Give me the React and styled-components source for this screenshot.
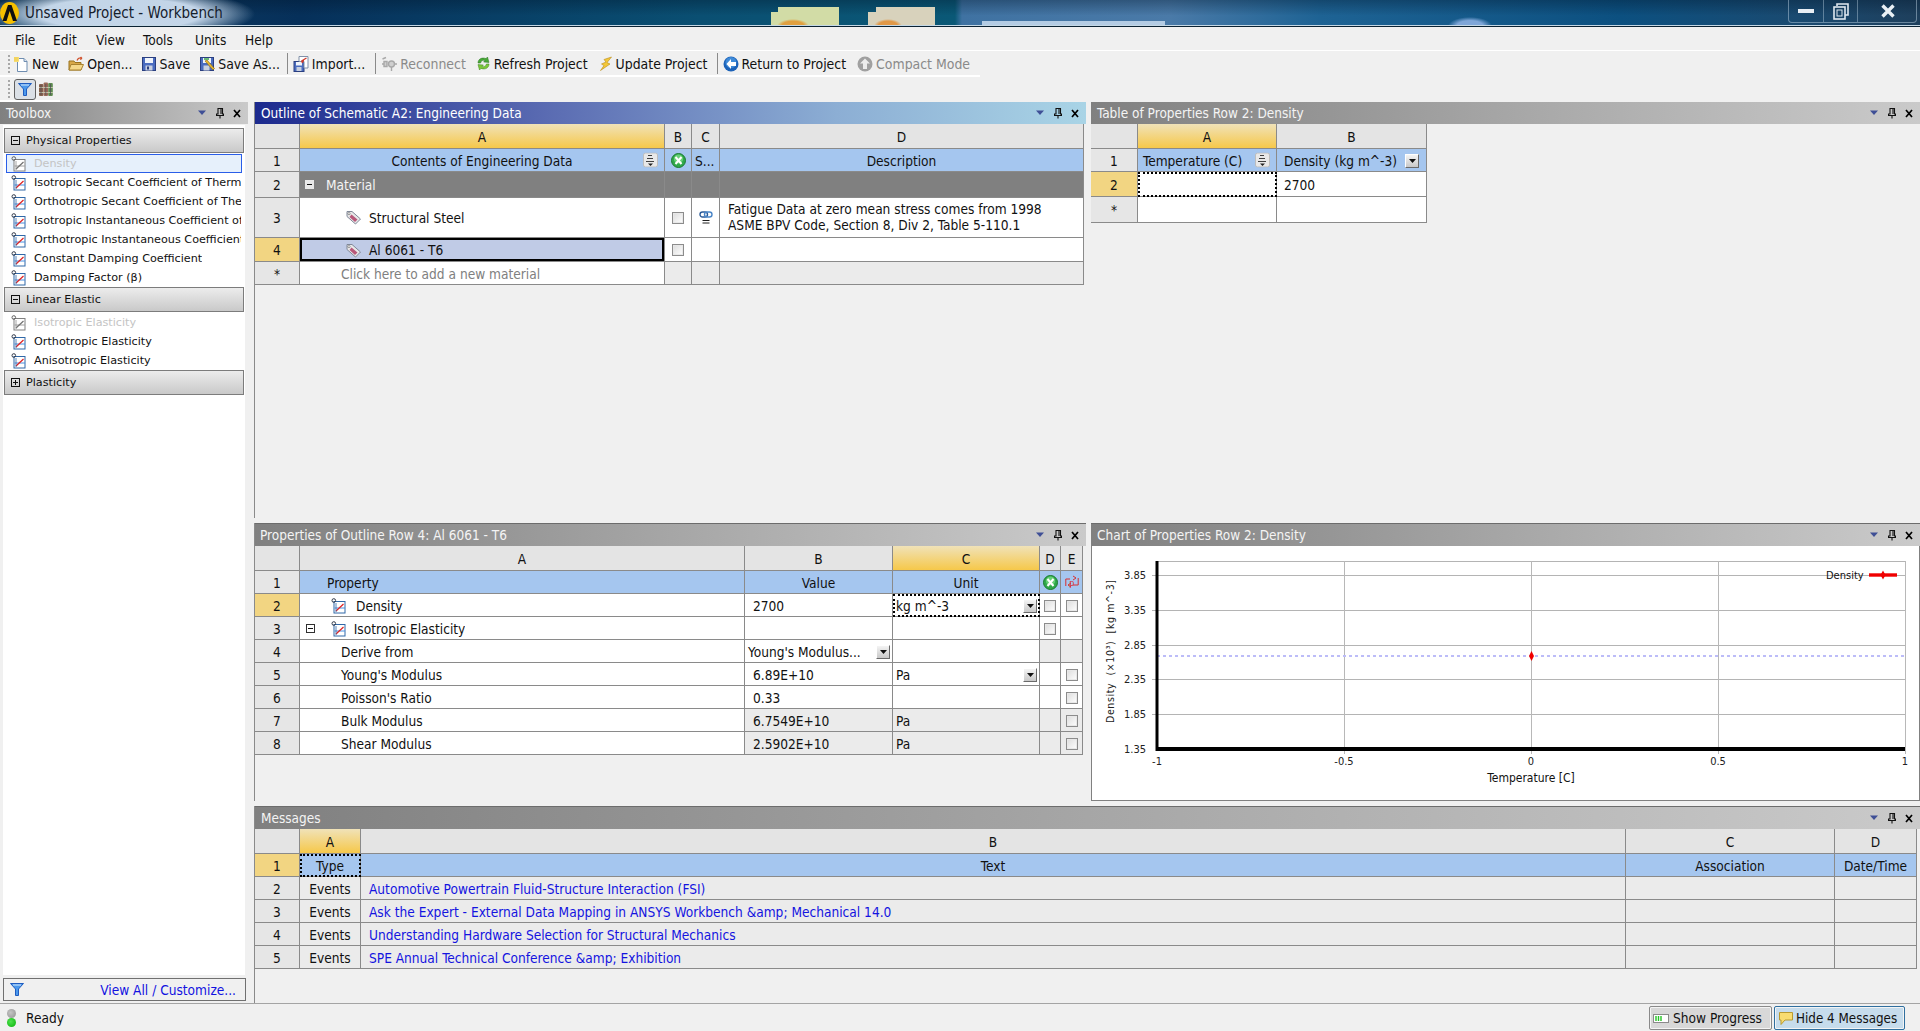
import React from 'react';
import styled, { createGlobalStyle } from 'styled-components';

const GlobalStyle = createGlobalStyle`
	html, body {
		margin: 0;
		padding: 0;
		background: #f0f0f0;
	}
	* {
		box-sizing: border-box;
	}
`;

const UI_FONT = `"DejaVu Sans Condensed", "DejaVu Sans", sans-serif`;
const LINE = '#8a8a8a';

const Window = styled.div`
	width: 1920px;
	height: 1031px;
	display: flex;
	flex-direction: column;
	overflow: hidden;
	background: #f0f0f0;
	font-family: ${UI_FONT};
	font-stretch: condensed;
	font-size: 13.6px;
	color: #111;
`;

/* title bar */
const TitleBar = styled.div`
	height: 27px;
	flex: none;
	display: flex;
	align-items: flex-start;
	justify-content: space-between;
	border-bottom: 1px solid #0b2233;
	box-shadow: inset 0 -1px 0 #c4d8e6;
	background:
		radial-gradient(ellipse 135px 26px at 120px 14px, rgba(205, 222, 240, 0.95) 60%, rgba(205, 222, 240, 0) 100%),
		radial-gradient(ellipse 16px 7px at 793px 26px, #e0a040 70%, rgba(224, 160, 64, 0) 100%),
		radial-gradient(ellipse 14px 7px at 888px 26px, #e09848 70%, rgba(224, 152, 72, 0) 100%),
		linear-gradient(#d2dca6, #d2dca6) 778px 7px / 61px 19px no-repeat,
		linear-gradient(#d2dca6, #d2dca6) 771px 12px / 20px 14px no-repeat,
		linear-gradient(#d8d2bc, #d8d2bc) 876px 7px / 59px 19px no-repeat,
		linear-gradient(#d8d2bc, #d8d2bc) 868px 12px / 20px 14px no-repeat,
		linear-gradient(#b4cce4, #b4cce4) 982px 21px / 183px 5px no-repeat,
		radial-gradient(ellipse 22px 9px at 1470px 26px, #7fa6d8 60%, rgba(127, 166, 216, 0) 100%),
		linear-gradient(rgba(0, 20, 40, 0.35), rgba(0, 20, 40, 0) 60%),
		linear-gradient(90deg, #123f63 0, #06305a 300px, #0a4f72 700px, #0a5876 955px, #3f72a2 962px, #4a7aa8 1170px, #1e6394 1320px, #0c5080 1620px, #1a4a70 1800px, #1e3f5c 1920px);
`;

const TitleLeft = styled.div`
	display: flex;
	align-items: center;
	gap: 5px;
	height: 25px;
	font-size: 15px;
	color: #15202c;
`;

const WindowButtons = styled.div`
	width: 129px;
	height: 23px;
	margin-right: 3px;
	display: grid;
	grid-template-columns: 35px 34px 60px;
	border: 1px solid rgba(200, 220, 235, 0.45);
	border-top: none;
	border-radius: 0 0 4px 4px;
`;

const WindowButton = styled.div`
	display: flex;
	align-items: center;
	justify-content: center;
	border-right: ${p => (p.$last ? 'none' : '1px solid rgba(200, 220, 235, 0.4)')};
`;

/* menu + toolbars */
const MenuBar = styled.div`
	height: 24px;
	flex: none;
	display: flex;
	align-items: center;
	border-bottom: 1px solid #fff;
	padding-top: 2px;
`;

const MenuItem = styled.div`
	width: ${p => p.$w}px;
	padding-left: ${p => p.$pad || 0}px;
`;

const ToolRow = styled.div`
	height: 26px;
	flex: none;
	width: 980px;
	display: flex;
	align-items: center;
	padding: 1px 0 0 8px;
	font-size: 13.9px;
	border-bottom: 2px solid #fff;
`;

const SubToolRow = styled.div`
	height: 25px;
	flex: none;
	width: 60px;
	display: flex;
	align-items: center;
	padding: 1px 0 0 8px;
	gap: 2px;
	border-bottom: 2px solid #fff;
`;

const Grip = styled.div`
	width: 3px;
	height: 18px;
	margin-right: ${p => p.$gap}px;
	background: radial-gradient(circle at 1px 1px, #a8a8a8 1px, transparent 1.2px) 0 0 / 3px 4px;
`;

const ToolButton = styled.div`
	display: flex;
	align-items: center;
	gap: 3px;
	margin-right: ${p => p.$gap}px;
	white-space: nowrap;
	color: ${p => (p.$off ? '#8a8a8a' : '#111')};
`;

const ToolSep = styled.div`
	width: 1px;
	height: 21px;
	background: #8a8a8a;
	margin: 0 5px 0 ${p => p.$left || 4}px;
`;

const FilterToggle = styled.div`
	width: 22px;
	height: 21px;
	display: flex;
	align-items: center;
	justify-content: center;
	border: 1px solid #606060;
	border-radius: 3px;
	background: #dbe0e6;
`;

/* main layout */
const Main = styled.div`
	flex: 1;
	min-height: 0;
	display: grid;
	grid-template-columns: 248px 1fr;
	column-gap: 6px;
`;

const Toolbox = styled.div`
	display: flex;
	flex-direction: column;
	min-height: 0;
`;

const PaneHeader = styled.div`
	height: ${p => (p.$ruled ? 23 : 22)}px;
	flex: none;
	display: flex;
	align-items: center;
	justify-content: space-between;
	padding: 0 7px 0 ${p => (p.$tight ? 5 : 6)}px;
	border-top: ${p => (p.$ruled ? '1px solid #6c6c6c' : 'none')};
	color: ${p => (p.$active ? '#fff' : '#f4f4f4')};
	font-size: 13.5px;
	background: ${p =>
		p.$active
			? 'linear-gradient(90deg, #1c2a8e 0, #5a6bb2 35%, #8caed4 70%, #a9d4e6 100%)'
			: 'linear-gradient(90deg, #808080 0, #a6a6a6 50%, #cacaca 100%)'};
`;

const PaneControls = styled.div`
	display: flex;
	align-items: center;
	gap: 9px;
`;

const ToolList = styled.div`
	flex: 1;
	margin: 1px 3px 3px 3px;
	padding: 3px 1px 0;
	background: #fff;
	display: flex;
	flex-direction: column;
`;

const GroupHead = styled.div`
	height: 25px;
	flex: none;
	display: flex;
	align-items: center;
	gap: 6px;
	padding-left: 6px;
	border: 1px solid #7c7c7c;
	background: linear-gradient(#ececec, #c9c9c9);
	font-family: "DejaVu Sans", sans-serif;
	font-stretch: normal;
	font-size: 11.2px;
`;

const ToolItem = styled.div`
	height: 19px;
	flex: none;
	margin: 0 2px;
	display: flex;
	align-items: center;
	gap: 8px;
	padding-left: 4px;
	white-space: nowrap;
	font-family: "DejaVu Sans", sans-serif;
	font-stretch: normal;
	font-size: 11.2px;
	color: ${p => (p.$off ? '#c4c4c4' : '#111')};
	border: ${p => (p.$sel ? '1px solid #2a5ee8' : '1px solid transparent')};
	background: ${p => (p.$sel ? '#e6f0fb' : 'transparent')};
`;

const ItemLabel = styled.span`
	min-width: 0;
	overflow: hidden;
`;

const ListGap = styled.div`
	height: 1px;
	flex: none;
`;

const ViewAll = styled.div`
	height: 23px;
	flex: none;
	margin: 0 2px 2px 3px;
	display: flex;
	align-items: center;
	justify-content: space-between;
	padding: 0 9px 0 6px;
	border: 1px solid #707070;
	color: #1212e0;
`;

const Workspace = styled.div`
	display: grid;
	grid-template-columns: 832px 829px;
	grid-template-rows: 416px 278px 1fr;
	column-gap: 5px;
	row-gap: 5px;
	min-height: 0;
`;

const Pane = styled.div`
	grid-column: ${p => p.$span || 'auto'};
	display: flex;
	flex-direction: column;
	min-height: 0;
	border-left: ${p => (p.$flat ? 'none' : `1px solid ${LINE}`)};
`;

/* tables */
const Sheet = styled.div`
	display: flex;
	flex-direction: column;
`;

const Row = styled.div`
	display: grid;
	grid-template-columns: ${p => p.$cols};
	height: ${p => p.$h}px;
	flex: none;
`;

const toneColors = {
	plain: '#fff',
	head: '#e4e4e4',
	num: '#e6e6e6',
	numHot: '#f2d582',
	blue: '#a5c6ef',
	dark: '#808080',
	selected: '#c0cbe6',
	ro: '#ebebeb'
};

const Cell = styled.div`
	display: flex;
	align-items: center;
	justify-content: ${p => (p.$center ? 'center' : 'flex-start')};
	gap: ${p => p.$gap || 0}px;
	padding-top: ${p => (p.$lift ? 0 : 1)}px;
	padding-left: ${p => p.$indent || 0}px;
	border-right: 1px solid ${LINE};
	border-bottom: 1px solid ${LINE};
	white-space: nowrap;
	overflow: hidden;
	line-height: 16px;
	position: relative;
	color: ${p => p.$color || '#111'};
	background: ${p => (p.$hot ? 'linear-gradient(#f0e2b8, #f6c84a)' : toneColors[p.$tone || 'plain'])};
	outline: ${p => (p.$focus ? '2px dotted #000' : 'none')};
	outline-offset: -2px;
	box-shadow: ${p => (p.$sel ? 'inset 0 0 0 2px #000' : 'none')};
`;

const CellPush = styled.div`
	margin-left: auto;
	display: flex;
`;

const TreeSlot = styled.div`
	width: 25px;
	flex: none;
	display: flex;
`;

const WrapText = styled.div`
	white-space: normal;
	line-height: 16px;
	margin-top: -3px;
`;

const DropButton = styled.div`
	width: 14px;
	height: 14px;
	margin: 0 ${p => p.$right || 2}px 0 auto;
	flex: none;
	display: flex;
	align-items: center;
	justify-content: center;
	background: linear-gradient(#f4f4f4, #c8c8c8);
	border: 1px solid #fff;
	border-right-color: #6a6a6a;
	border-bottom-color: #6a6a6a;
`;

const Corner = styled.div`
	position: absolute;
	right: 6px;
	top: 50%;
	transform: translateY(-50%);
	display: flex;
`;

const Check = styled.div`
	width: 12px;
	height: 12px;
	flex: none;
	border: 1px solid #8c8c8c;
	background: linear-gradient(135deg, #dcdcdc, #fff);
	box-shadow: inset 0 0 0 1px #e8e8e8;
`;

const Hint = styled.span`
	color: #808080;
`;

const MsgLink = styled.span`
	color: #1414e0;
`;

const ChartBody = styled.div`
	flex: 1;
	min-height: 0;
	background: #fff;
	border: 1px solid #808080;
	border-top: none;
`;

const ChartFrame = styled.svg`
	display: block;
`;

/* status bar */
const StatusBar = styled.div`
	height: 28px;
	flex: none;
	display: flex;
	align-items: center;
	border-top: 1px solid #a4a4a4;
	padding: 1px 15px 0 7px;
`;

const Lights = styled.div`
	display: flex;
	flex-direction: column;
	margin-right: 10px;
`;

const Light = styled.div`
	width: 9px;
	height: 9px;
	border-radius: 50%;
	background: ${p => (p.$on ? 'radial-gradient(circle at 40% 40%, #4ee24e, #08b008)' : 'radial-gradient(circle at 40% 40%, #c4c4c4, #909090)')};
`;

const StatusPush = styled.div`
	flex: 1;
`;

const StatusButton = styled.div`
	height: 24px;
	width: ${p => p.$w}px;
	margin-left: ${p => p.$left || 0}px;
	display: flex;
	align-items: center;
	gap: ${p => (p.$on ? 2 : 4)}px;
	padding-left: 3px;
	font-size: ${p => (p.$on ? 13.3 : 13.6)}px;
	border: 1px solid ${p => (p.$on ? '#2f6f9f' : '#8a8a8a')};
	border-radius: 2px;
	background: ${p => (p.$on ? '#c6dcec' : '#d8d8d8')};
	box-shadow: inset 0 0 0 1px #f4f4f4;
`;

/* icons */
const Svg = ({ w = 16, h = 16, box, children }) => (
	<svg width={w} height={h} viewBox={box || `0 0 ${w} ${h}`} style={{ flex: 'none', display: 'block' }}>
		{children}
	</svg>
);

const AnsysLogo = () => (
	<Svg w={20} h={22} box="0 0 20 22">
		<ellipse cx="9.5" cy="11" rx="9.5" ry="11" fill="#f6c000" />
		<path d="M2.5 19 L8 3 H11.5 L17 19 H13 L9.7 9 L6.5 19 Z" fill="#101010" />
	</Svg>
);

const NewIcon = () => (
	<Svg>
		<path d="M4.5 2.5 H11 L14 5.5 V15.5 H4.5 Z" fill="#fff" stroke="#6f8db0" />
		<path d="M11 2.5 V5.5 H14" fill="#dce6f2" stroke="#6f8db0" />
		<path d="M1 1 H6 V6 H1 Z" fill="#fbeb9a" />
		<path d="M1 2 H6 M1 4 H6 M2 1 V6 M4 1 V6" stroke="#f0c840" strokeWidth=".8" />
	</Svg>
);

const OpenIcon = () => (
	<Svg>
		<path d="M1 5 H6 L7 6.5 H13 V14 H1 Z" fill="#d8a848" stroke="#9a7420" />
		<path d="M3 8.5 H15.5 L13 14 H1 Z" fill="#f4d88a" stroke="#a88230" />
		<path d="M9 4.5 C10 2 12 1.5 14 2.5 M14 2.5 L12.6 1 M14 2.5 L12.2 3.6" fill="none" stroke="#d0502c" strokeWidth="1.2" />
	</Svg>
);

const SaveIcon = () => (
	<Svg>
		<rect x="1.5" y="1.5" width="13" height="13" fill="#4a6cc0" stroke="#2a3f80" />
		<rect x="4" y="2" width="8" height="5" fill="#f0f4fa" />
		<rect x="4.5" y="9.5" width="7" height="5" fill="#c8d0e0" />
		<rect x="6" y="10.5" width="2" height="3" fill="#2a3f80" />
	</Svg>
);

const SaveAsIcon = () => (
	<Svg>
		<rect x="1.5" y="1.5" width="13" height="13" fill="#4a6cc0" stroke="#2a3f80" />
		<rect x="4" y="2" width="8" height="5" fill="#f0f4fa" />
		<rect x="4.5" y="9.5" width="6" height="5" fill="#c8d0e0" />
		<path d="M6 5 L14 14 L15.5 12.5 L8 4 Z" fill="#e8b830" stroke="#806010" strokeWidth=".6" />
		<path d="M5 3 H10" stroke="#30a040" strokeWidth="1.4" />
	</Svg>
);

const ImportIcon = () => (
	<Svg>
		<rect x="1" y="5.5" width="10" height="10" fill="#4a6cc0" stroke="#2a3f80" />
		<rect x="3" y="6" width="6" height="3.5" fill="#f0f4fa" />
		<rect x="3.5" y="11" width="5" height="4" fill="#c8d0e0" />
		<path d="M6 .5 H15 V12 H11 V5.5 H6 Z" fill="#fff" stroke="#8090a8" />
		<path d="M13.5 2 L8.5 5 M8.5 5 L11 5.2 M8.5 5 L9.6 7" fill="none" stroke="#d03828" strokeWidth="1.3" />
	</Svg>
);

const PlugIcon = () => (
	<Svg>
		<g fill="none" stroke="#a8a8a8" strokeWidth="1.4">
			<circle cx="10.5" cy="8" r="3" fill="#cfcfcf" />
			<path d="M1 8 H3 M13.5 8 H16 M10.5 11 V15" />
			<path d="M3 5.5 H6 V10.5 H3 Z" fill="#cfcfcf" />
			<path d="M1.5 3 L5 1.5" />
		</g>
	</Svg>
);

const RefreshIcon = () => (
	<Svg w={15} h={15}>
		<path d="M2 7 C2 3 6 1 10 2.6 L11.5 1 L13 6.4 L7.6 6 L9 4.6 C6.6 3.8 5 5 4.6 7 Z" fill="#48a838" stroke="#2a7020" strokeWidth=".5" />
		<path d="M13 8 C13 12 9 14 5 12.4 L3.5 14 L2 8.6 L7.4 9 L6 10.4 C8.4 11.2 10 10 10.4 8 Z" fill="#7cc838" stroke="#3a8020" strokeWidth=".5" />
	</Svg>
);

const BoltIcon = () => (
	<Svg w={14} h={15}>
		<path d="M12.5 1 L5 3.5 L7 6 L2.5 8 L5 9.6 L1.5 14.5 L11 8 L8 6.6 Z" fill="#f4c838" stroke="#b88a18" strokeWidth=".6" />
	</Svg>
);

const ReturnIcon = () => (
	<Svg>
		<circle cx="8" cy="8" r="7.5" fill="#1c62b8" />
		<circle cx="8" cy="6.5" r="5.5" fill="#3e8ad8" />
		<path d="M8 3 L3.5 8 L8 13 V10 H13 V6 H8 Z" fill="#fff" />
	</Svg>
);

const CompactIcon = () => (
	<Svg>
		<circle cx="8" cy="8" r="7.5" fill="#a0a0a0" />
		<path d="M8 2.5 L3 7.5 H6 V13 H10 V7.5 H13 Z" fill="#ececec" />
	</Svg>
);

const FunnelIcon = ({ w = 14, h = 13 }) => (
	<Svg w={w} h={h} box="0 0 14 13">
		<path d="M.5 .5 H13.5 L8.5 6 V12.5 H5.5 V6 Z" fill="#4a98ec" stroke="#1f5cc0" />
		<path d="M3 2 H11" stroke="#d4e8fc" />
	</Svg>
);

const BooksIcon = () => (
	<Svg>
		<rect x="1" y="3" width="4.4" height="12" rx="1" fill="#86604c" />
		<rect x="5.6" y="1.5" width="4.4" height="13.5" rx="1" fill="#9a6a58" />
		<rect x="10.2" y="2" width="4.6" height="13" rx="1" fill="#5e8a50" />
		<path d="M1 6.5 H15 M1 11.5 H15" stroke="#c8c8b0" strokeWidth=".9" />
		<path d="M3 4 V14 M7.8 3 V14 M12.5 3 V14" stroke="#4a4a58" strokeWidth=".7" />
	</Svg>
);

const DownMark = () => (
	<Svg w={10} h={6}>
		<path d="M1 .5 H9 L5 5 Z" fill="#3f4f96" />
	</Svg>
);

const PinMark = () => (
	<Svg w={8} h={11}>
		<path d="M2 .5 H6.5 V6 H7.5 V7.5 H.5 V6 H2 Z M4 7.5 V10.5 M5 1 V6" fill="none" stroke="#111" strokeWidth="1.1" />
	</Svg>
);

const CloseMark = () => (
	<Svg w={8} h={9}>
		<path d="M1 1 L7 8 M7 1 L1 8" stroke="#000" strokeWidth="1.7" />
	</Svg>
);

const PaneMarks = () => (
	<PaneControls>
		<DownMark />
		<PinMark />
		<CloseMark />
	</PaneControls>
);

const ChartIcon = ({ off }) => (
	<Svg w={15} h={16}>
		<rect x="3" y="3.5" width="11" height="11.5" fill="#fff" stroke={off ? '#808080' : '#3068a8'} />
		<path d="M3.5 10 H14" stroke={off ? '#a0a0a0' : '#4a90e0'} />
		<path d="M5 13 L12.5 6" stroke={off ? '#707070' : '#e02020'} strokeWidth="1.2" />
		<path d="M5 14 V5 " stroke={off ? '#909090' : '#3068a8'} strokeWidth=".8" />
		<circle cx="2.8" cy="2.5" r="1.8" fill="none" stroke={off ? '#606060' : '#303848'} />
	</Svg>
);

const TagIcon = () => (
	<Svg w={17} h={15}>
		<path d="M2 1.5 L7 1.5 L15.5 9 L10.5 14 L2 6.5 Z" fill="#e8e8e8" stroke="#808898" />
		<path d="M6.5 4.5 L12.5 9.5 L10 12 L4.5 7 Z" fill="#b8587a" />
		<circle cx="4" cy="3.6" r="1.1" fill="#fff" stroke="#606060" strokeWidth=".6" />
	</Svg>
);

const Tree = ({ open, dark }) => (
	<Svg w={9} h={9}>
		<rect x=".5" y=".5" width="8" height="8" fill={dark ? '#e8e8e8' : '#fff'} stroke={dark ? '#e8e8e8' : '#303030'} />
		<path d={open ? 'M2 4.5 H7' : 'M2 4.5 H7 M4.5 2 V7'} stroke="#101010" />
	</Svg>
);

const GroupTree = ({ open }) => (
	<Svg w={9} h={9}>
		<rect x=".5" y=".5" width="8" height="8" fill="none" stroke="#101010" />
		<path d={open ? 'M2 4.5 H7' : 'M2 4.5 H7 M4.5 2 V7'} stroke="#101010" />
	</Svg>
);

const GreenX = () => (
	<Svg w={15} h={15}>
		<circle cx="7.5" cy="7.5" r="7" fill="#2fa84a" stroke="#1a7a30" />
		<circle cx="7.5" cy="6" r="4.6" fill="#68d078" />
		<path d="M4.5 4 L10.5 11 M10.5 4 L4.5 11" stroke="#fff" strokeWidth="2" />
	</Svg>
);

const RedSwap = () => (
	<Svg w={14} h={15}>
		<path d="M.8 4 V11 M.8 4 H5 M13.2 3 V10 H8" fill="none" stroke="#d83030" />
		<text x="4.2" y="11" fontSize="9" fill="#d83030" fontFamily="DejaVu Sans, sans-serif">p</text>
		<path d="M8 1 L11 3 L8 5 M6 8 L3 10 L6 12" fill="none" stroke="#d83030" />
	</Svg>
);

const LinkIcon = () => (
	<Svg w={14} h={16}>
		<rect x="1" y="2" width="7.5" height="5" rx="2.5" fill="none" stroke="#2a5a98" strokeWidth="1.4" />
		<rect x="5.5" y="2" width="7.5" height="5" rx="2.5" fill="none" stroke="#4a86c8" strokeWidth="1.4" />
		<path d="M3.5 10.5 H10.5 M3.5 13 H10.5" stroke="#202020" />
	</Svg>
);

const SortIcon = () => (
	<Svg w={15} h={15}>
		<rect x=".5" y=".5" width="14" height="14" rx="2" fill="#e8e8e8" stroke="#bdbdbd" />
		<path d="M5 3 H9 M4 6 H10 M3 9 H11" stroke="#404040" />
		<path d="M5 11 H10 L7.5 13.5 Z" fill="#202020" />
	</Svg>
);

const DropArrow = () => (
	<Svg w={7} h={4}>
		<path d="M0 0 H7 L3.5 4 Z" fill="#101010" />
	</Svg>
);

const ProgressIcon = () => (
	<Svg w={16} h={9}>
		<rect x=".5" y=".5" width="15" height="8" fill="#fff" stroke="#8a8a8a" />
		<path d="M3 2 V7 M5.5 2 V7 M8 2 V7" stroke="#24c424" strokeWidth="1.4" />
	</Svg>
);

const BubbleIcon = () => (
	<Svg w={16} h={16}>
		<path d="M1.5 2.5 H14.5 V10 H7 L3 14.5 V10 H1.5 Z" fill="#f8dc70" stroke="#b89a30" />
	</Svg>
);

const MinGlyph = () => (
	<Svg w={16} h={6}>
		<rect y="1" width="16" height="4" fill="#e8eef4" />
	</Svg>
);

const RestoreGlyph = () => (
	<Svg w={16} h={17}>
		<path d="M4 3 V1 H15 V12 H12" fill="none" stroke="#dfe8f0" strokeWidth="1.6" />
		<rect x="1" y="4" width="11" height="12" fill="none" stroke="#dfe8f0" strokeWidth="1.6" />
		<rect x="4" y="7" width="5" height="6" fill="none" stroke="#dfe8f0" />
	</Svg>
);

const CloseGlyph = () => (
	<Svg w={14} h={14}>
		<path d="M1.5 1.5 L12.5 12.5 M12.5 1.5 L1.5 12.5" stroke="#eaf0f5" strokeWidth="3.4" />
	</Svg>
);

/* chart */
const Chart = () => {
	const yTicks = [[29, '3.85'], [64, '3.35'], [99, '2.85'], [133, '2.35'], [168, '1.85'], [203, '1.35']];
	const xTicks = [[65, '-1'], [252, '-0.5'], [439, '0'], [626, '0.5'], [813, '1']];
	const font = '"DejaVu Sans Condensed", "DejaVu Sans", sans-serif';

	return (
		<ChartFrame width="827" height="254" viewBox="0 0 827 254">
			{yTicks.slice(0, 5).map(([y]) => (
				<line key={y} x1="60" x2="813" y1={y + 0.5} y2={y + 0.5} stroke="#b4b4b4" />
			))}
			<line x1="65" x2="813" y1="15.5" y2="15.5" stroke="#b4b4b4" />
			{xTicks.slice(1).map(([x]) => (
				<line key={x} x1={x + 0.5} x2={x + 0.5} y1="15" y2="208" stroke="#b8b8b8" />
			))}
			<line x1="65" x2="813" y1="110" y2="110" stroke="#bcbcf8" strokeWidth="2" strokeDasharray="3 3" />
			<path d="M439.5 105 L442 110 L439.5 115 L437 110 Z" fill="#f00000" />
			<line x1="65" x2="65" y1="15" y2="205" stroke="#000" strokeWidth="3" />
			<line x1="64" x2="813" y1="203" y2="203" stroke="#000" strokeWidth="4" />
			{yTicks.map(([y, label]) => (
				<text key={label} x="54" y={y + 4} textAnchor="end" fontSize="11" fontFamily={font} fill="#222">{label}</text>
			))}
			{xTicks.map(([x, label]) => (
				<text key={label} x={x} y="219" textAnchor="middle" fontSize="11" fontFamily={font} fill="#222">{label}</text>
			))}
			<text x="439" y="236" textAnchor="middle" fontSize="12" fontFamily={font} fill="#111">Temperature [C]</text>
			<text x="734" y="33" fontSize="11" fontFamily={font} fill="#111">Density</text>
			<line x1="777" x2="805" y1="29" y2="29" stroke="#f00000" strokeWidth="3.4" />
			<path d="M791 24.5 L793.5 29 L791 33.5 L788.5 29 Z" fill="#f00000" />
			<text
				transform="translate(22 177) rotate(-90)"
				fontSize="10.5"
				fontFamily="DejaVu Sans, sans-serif"
				fill="#222"
				textLength="143"
				xmlSpace="preserve"
			>
				Density  (×10³)  [kg m^-3]
			</text>
		</ChartFrame>
	);
};

/* data */
const OUTLINE = '45px 365px 27px 28px 364px';
const TABLE = '47px 139px 150px';
const PROPS = '45px 445px 148px 147px 21px 22px';
const MSGS = '45px 61px 1265px 209px 82px';

const physical = [
	'Isotropic Secant Coefficient of Thermal Expansion',
	'Orthotropic Secant Coefficient of Thermal Expansion',
	'Isotropic Instantaneous Coefficient of Thermal Expansion',
	'Orthotropic Instantaneous Coefficient of Thermal Expansion',
	'Constant Damping Coefficient',
	'Damping Factor (β)'
];

const messages = [
	'Automotive Powertrain Fluid-Structure Interaction (FSI)',
	'Ask the Expert - External Data Mapping in ANSYS Workbench &amp; Mechanical 14.0',
	'Understanding Hardware Selection for Structural Mechanics',
	'SPE Annual Technical Conference &amp; Exhibition'
];

const App = () => (
	<Window>
		<GlobalStyle />

		<TitleBar>
			<TitleLeft>
				<AnsysLogo />
				Unsaved Project - Workbench
			</TitleLeft>
			<WindowButtons>
				<WindowButton><MinGlyph /></WindowButton>
				<WindowButton><RestoreGlyph /></WindowButton>
				<WindowButton $last><CloseGlyph /></WindowButton>
			</WindowButtons>
		</TitleBar>

		<MenuBar>
			<MenuItem $w={53} $pad={15}>File</MenuItem>
			<MenuItem $w={43}>Edit</MenuItem>
			<MenuItem $w={47}>View</MenuItem>
			<MenuItem $w={52}>Tools</MenuItem>
			<MenuItem $w={50}>Units</MenuItem>
			<MenuItem $w={50}>Help</MenuItem>
		</MenuBar>

		<ToolRow>
			<Grip $gap={2} />
			<ToolButton $gap={9}><NewIcon />New</ToolButton>
			<ToolButton $gap={8}><OpenIcon />Open...</ToolButton>
			<ToolButton $gap={9}><SaveIcon />Save</ToolButton>
			<ToolButton $gap={3}><SaveAsIcon />Save As...</ToolButton>
			<ToolSep />
			<ToolButton $gap={6}><ImportIcon />Import...</ToolButton>
			<ToolSep />
			<ToolButton $off $gap={10}><PlugIcon />Reconnect</ToolButton>
			<ToolButton $gap={11}><RefreshIcon />Refresh Project</ToolButton>
			<ToolButton $gap={5}><BoltIcon />Update Project</ToolButton>
			<ToolSep />
			<ToolButton $gap={11}><ReturnIcon />Return to Project</ToolButton>
			<ToolButton $off $gap={0}><CompactIcon />Compact Mode</ToolButton>
		</ToolRow>

		<SubToolRow>
			<Grip $gap={1} />
			<FilterToggle><FunnelIcon /></FilterToggle>
			<BooksIcon />
		</SubToolRow>

		<Main>
			<Toolbox>
				<PaneHeader>
					Toolbox
					<PaneMarks />
				</PaneHeader>
				<ToolList>
					<GroupHead><GroupTree open />Physical Properties</GroupHead>
					<ListGap />
					<ToolItem $sel $off><ChartIcon off /><ItemLabel>Density</ItemLabel></ToolItem>
					{physical.map(name => (
						<ToolItem key={name}><ChartIcon /><ItemLabel>{name}</ItemLabel></ToolItem>
					))}
					<GroupHead><GroupTree open />Linear Elastic</GroupHead>
					<ListGap />
					<ToolItem $off><ChartIcon off /><ItemLabel>Isotropic Elasticity</ItemLabel></ToolItem>
					<ToolItem><ChartIcon /><ItemLabel>Orthotropic Elasticity</ItemLabel></ToolItem>
					<ToolItem><ChartIcon /><ItemLabel>Anisotropic Elasticity</ItemLabel></ToolItem>
					<GroupHead><GroupTree />Plasticity</GroupHead>
				</ToolList>
				<ViewAll>
					<FunnelIcon />
					View All / Customize...
				</ViewAll>
			</Toolbox>

			<Workspace>
				<Pane>
					<PaneHeader $active>
						Outline of Schematic A2: Engineering Data
						<PaneMarks />
					</PaneHeader>
					<Sheet>
						<Row $cols={OUTLINE} $h={25}>
							<Cell $tone="head" />
							<Cell $hot $center>A</Cell>
							<Cell $tone="head" $center>B</Cell>
							<Cell $tone="head" $center>C</Cell>
							<Cell $tone="head" $center>D</Cell>
						</Row>
						<Row $cols={OUTLINE} $h={23}>
							<Cell $tone="num" $center>1</Cell>
							<Cell $tone="blue" $center>
								Contents of Engineering Data
								<Corner><SortIcon /></Corner>
							</Cell>
							<Cell $tone="blue" $center><GreenX /></Cell>
							<Cell $tone="blue" $indent={3}>S...</Cell>
							<Cell $tone="blue" $center>Description</Cell>
						</Row>
						<Row $cols={OUTLINE} $h={26}>
							<Cell $tone="num" $center $lift>2</Cell>
							<Cell $tone="dark" $lift $color="#f4f4f4" $indent={5} $gap={12}>
								<Tree open dark />Material
							</Cell>
							<Cell $tone="dark" />
							<Cell $tone="dark" />
							<Cell $tone="dark" />
						</Row>
						<Row $cols={OUTLINE} $h={40}>
							<Cell $tone="num" $center $lift>3</Cell>
							<Cell $lift $indent={45} $gap={7}><TagIcon />Structural Steel</Cell>
							<Cell $center><Check /></Cell>
							<Cell $center><LinkIcon /></Cell>
							<Cell $indent={8}>
								<WrapText>
									Fatigue Data at zero mean stress comes from 1998<br />
									ASME BPV Code, Section 8, Div 2, Table 5-110.1
								</WrapText>
							</Cell>
						</Row>
						<Row $cols={OUTLINE} $h={24}>
							<Cell $tone="numHot" $center>4</Cell>
							<Cell $tone="selected" $sel $indent={45} $gap={7}><TagIcon />Al 6061 - T6</Cell>
							<Cell $center><Check /></Cell>
							<Cell />
							<Cell />
						</Row>
						<Row $cols={OUTLINE} $h={23}>
							<Cell $tone="num" $center>*</Cell>
							<Cell $indent={41}><Hint>Click here to add a new material</Hint></Cell>
							<Cell $tone="ro" />
							<Cell $tone="ro" />
							<Cell $tone="ro" />
						</Row>
					</Sheet>
				</Pane>

				<Pane $flat>
					<PaneHeader>
						Table of Properties Row 2: Density
						<PaneMarks />
					</PaneHeader>
					<Sheet>
						<Row $cols={TABLE} $h={25}>
							<Cell $tone="head" />
							<Cell $hot $center>A</Cell>
							<Cell $tone="head" $center>B</Cell>
						</Row>
						<Row $cols={TABLE} $h={23}>
							<Cell $tone="num" $center>1</Cell>
							<Cell $tone="blue" $indent={5}>
								Temperature (C)
								<Corner><SortIcon /></Corner>
							</Cell>
							<Cell $tone="blue" $indent={7}>
								Density (kg m^-3)
								<DropButton $right={7}><DropArrow /></DropButton>
							</Cell>
						</Row>
						<Row $cols={TABLE} $h={25}>
							<Cell $tone="numHot" $center>2</Cell>
							<Cell $focus />
							<Cell $indent={7}>2700</Cell>
						</Row>
						<Row $cols={TABLE} $h={26}>
							<Cell $tone="num" $center>*</Cell>
							<Cell />
							<Cell />
						</Row>
					</Sheet>
				</Pane>

				<Pane>
					<PaneHeader $tight $ruled>
						Properties of Outline Row 4: Al 6061 - T6
						<PaneMarks />
					</PaneHeader>
					<Sheet>
						<Row $cols={PROPS} $h={25}>
							<Cell $tone="head" />
							<Cell $tone="head" $center>A</Cell>
							<Cell $tone="head" $center>B</Cell>
							<Cell $hot $center>C</Cell>
							<Cell $tone="head" $center>D</Cell>
							<Cell $tone="head" $center>E</Cell>
						</Row>
						<Row $cols={PROPS} $h={23}>
							<Cell $tone="num" $center>1</Cell>
							<Cell $tone="blue" $indent={27}>Property</Cell>
							<Cell $tone="blue" $center>Value</Cell>
							<Cell $tone="blue" $center>Unit</Cell>
							<Cell $tone="blue" $center><GreenX /></Cell>
							<Cell $tone="blue" $center><RedSwap /></Cell>
						</Row>
						<Row $cols={PROPS} $h={23}>
							<Cell $tone="numHot" $center>2</Cell>
							<Cell $indent={31} $gap={10}><ChartIcon />Density</Cell>
							<Cell $indent={8}>2700</Cell>
							<Cell $focus $indent={3}>
								kg m^-3
								<CellPush><DropButton><DropArrow /></DropButton></CellPush>
							</Cell>
							<Cell $center><Check /></Cell>
							<Cell $center><Check /></Cell>
						</Row>
						<Row $cols={PROPS} $h={23}>
							<Cell $tone="num" $center>3</Cell>
							<Cell $indent={6}>
								<TreeSlot><Tree open /></TreeSlot>
								<ChartIcon />
								<ItemLabel>&nbsp;&nbsp;Isotropic Elasticity</ItemLabel>
							</Cell>
							<Cell />
							<Cell />
							<Cell $center><Check /></Cell>
							<Cell />
						</Row>
						<Row $cols={PROPS} $h={23}>
							<Cell $tone="num" $center>4</Cell>
							<Cell $indent={41}>Derive from</Cell>
							<Cell $indent={3}>
								Young's Modulus...
								<DropButton><DropArrow /></DropButton>
							</Cell>
							<Cell />
							<Cell $tone="ro" />
							<Cell $tone="ro" />
						</Row>
						<Row $cols={PROPS} $h={23}>
							<Cell $tone="num" $center>5</Cell>
							<Cell $indent={41}>Young's Modulus</Cell>
							<Cell $indent={8}>6.89E+10</Cell>
							<Cell $indent={3}>
								Pa
								<CellPush><DropButton><DropArrow /></DropButton></CellPush>
							</Cell>
							<Cell />
							<Cell $center><Check /></Cell>
						</Row>
						<Row $cols={PROPS} $h={23}>
							<Cell $tone="num" $center>6</Cell>
							<Cell $indent={41}>Poisson's Ratio</Cell>
							<Cell $indent={8}>0.33</Cell>
							<Cell />
							<Cell />
							<Cell $center><Check /></Cell>
						</Row>
						<Row $cols={PROPS} $h={23}>
							<Cell $tone="num" $center>7</Cell>
							<Cell $indent={41}>Bulk Modulus</Cell>
							<Cell $tone="ro" $indent={8}>6.7549E+10</Cell>
							<Cell $tone="ro" $indent={3}>Pa</Cell>
							<Cell $tone="ro" />
							<Cell $tone="ro" $center><Check /></Cell>
						</Row>
						<Row $cols={PROPS} $h={23}>
							<Cell $tone="num" $center>8</Cell>
							<Cell $indent={41}>Shear Modulus</Cell>
							<Cell $tone="ro" $indent={8}>2.5902E+10</Cell>
							<Cell $tone="ro" $indent={3}>Pa</Cell>
							<Cell $tone="ro" />
							<Cell $tone="ro" $center><Check /></Cell>
						</Row>
					</Sheet>
				</Pane>

				<Pane $flat>
					<PaneHeader $ruled>
						Chart of Properties Row 2: Density
						<PaneMarks />
					</PaneHeader>
					<ChartBody>
						<Chart />
					</ChartBody>
				</Pane>

				<Pane $span="1 / 3">
					<PaneHeader $ruled>
						Messages
						<PaneMarks />
					</PaneHeader>
					<Sheet>
						<Row $cols={MSGS} $h={25}>
							<Cell $tone="head" />
							<Cell $hot $center>A</Cell>
							<Cell $tone="head" $center>B</Cell>
							<Cell $tone="head" $center>C</Cell>
							<Cell $tone="head" $center>D</Cell>
						</Row>
						<Row $cols={MSGS} $h={23}>
							<Cell $tone="numHot" $center>1</Cell>
							<Cell $tone="blue" $focus $center>Type</Cell>
							<Cell $tone="blue" $center>Text</Cell>
							<Cell $tone="blue" $center>Association</Cell>
							<Cell $tone="blue" $center>Date/Time</Cell>
						</Row>
						{messages.map((text, i) => (
							<Row key={text} $cols={MSGS} $h={23}>
								<Cell $tone="num" $center>{i + 2}</Cell>
								<Cell $tone="ro" $center>Events</Cell>
								<Cell $tone="ro" $indent={8}><MsgLink>{text}</MsgLink></Cell>
								<Cell $tone="ro" />
								<Cell $tone="ro" />
							</Row>
						))}
					</Sheet>
				</Pane>
			</Workspace>
		</Main>

		<StatusBar>
			<Lights>
				<Light />
				<Light $on />
			</Lights>
			Ready
			<StatusPush />
			<StatusButton $w={123}><ProgressIcon />Show Progress</StatusButton>
			<StatusButton $w={131} $left={2} $on><BubbleIcon />Hide 4 Messages</StatusButton>
		</StatusBar>
	</Window>
);

export default App;
